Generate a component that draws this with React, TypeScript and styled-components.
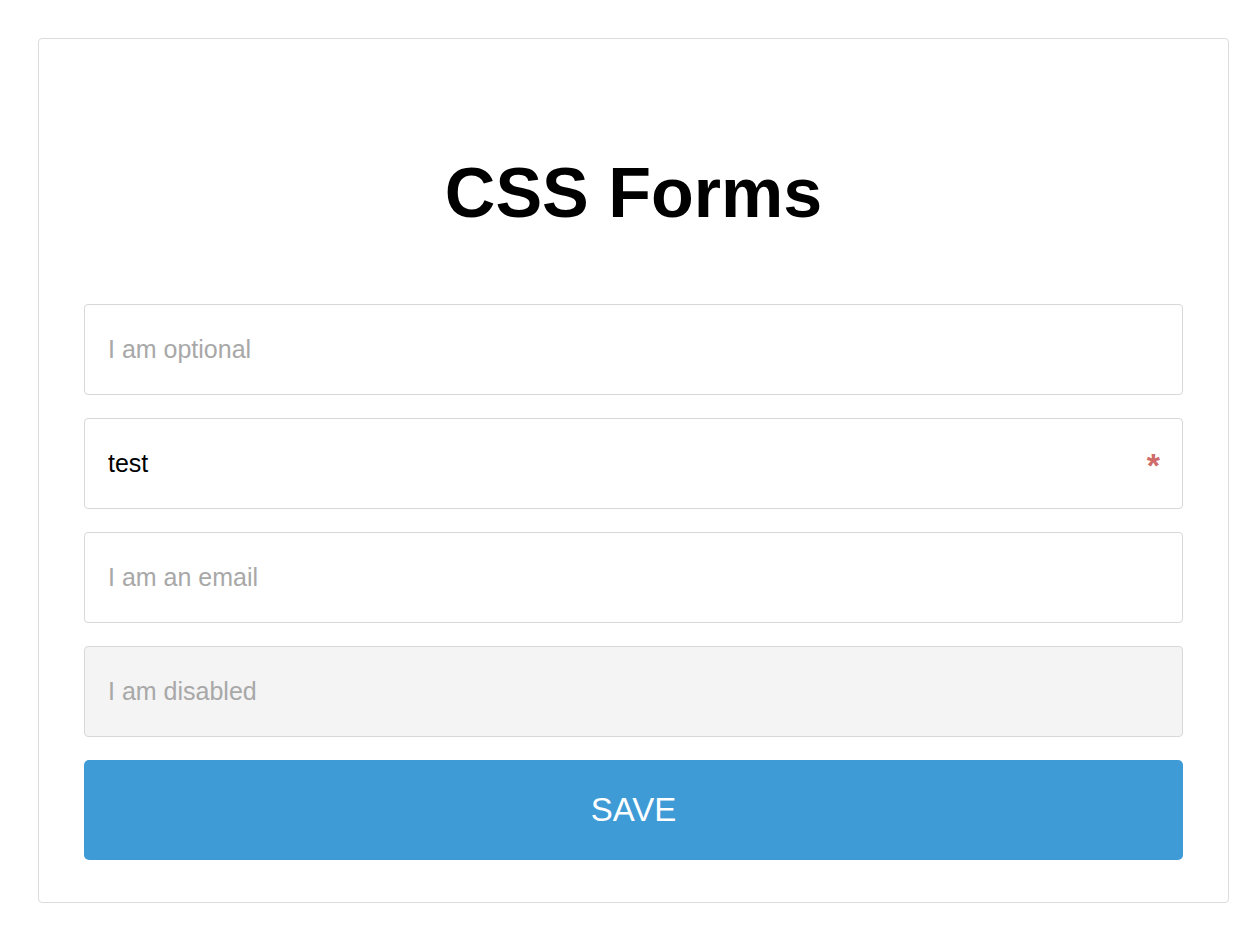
import React from 'react';
import styled, { createGlobalStyle } from 'styled-components';

const GlobalStyle = createGlobalStyle`
  html, body {
    margin: 0;
    padding: 0;
    background: #ffffff;
  }
  body {
    font-family: "Liberation Sans", Arial, Helvetica, sans-serif;
  }
`;

export default function App() {
  return (
    <Page>
      <GlobalStyle />
      <Card>
        <Title>CSS Forms</Title>
        <Form onSubmit={(e) => e.preventDefault()}>
          <Input type="text" placeholder="I am optional" />
          <Field>
            <Input type="text" defaultValue="test" required />
            <Required>*</Required>
          </Field>
          <Input type="email" placeholder="I am an email" />
          <Input type="text" placeholder="I am disabled" disabled />
          <SaveButton type="submit">SAVE</SaveButton>
        </Form>
      </Card>
    </Page>
  );
}

const Page = styled.div`
  padding: 38px 0 0 38px;
`;

const Card = styled.div`
  box-sizing: border-box;
  width: 1191px;
  height: 865px;
  padding: 114px 45px 42px;
  border: 1px solid #dcdcdc;
  border-radius: 4px;
`;

const Title = styled.h1`
  margin: 0 0 71px;
  font-size: 70px;
  font-weight: 700;
  text-align: center;
  color: #000000;
`;

const Form = styled.form`
  display: flex;
  flex-direction: column;
  gap: 23px;
`;

const Field = styled.div`
  position: relative;
`;

const Input = styled.input`
  box-sizing: border-box;
  width: 100%;
  height: 91px;
  padding: 0 23px;
  border: 1px solid #d8d8d8;
  border-radius: 4px;
  outline: none;
  background: #ffffff;
  font-family: "Liberation Sans", Arial, sans-serif;
  font-size: 25px;
  color: #000000;

  &::placeholder {
    color: #a8a8a8;
  }

  &:disabled {
    background: #f4f4f4;
  }
`;

const Required = styled.span`
  position: absolute;
  right: 23px;
  top: 30px;
  font-family: "Liberation Sans", Arial, sans-serif;
  font-size: 34px;
  font-weight: 700;
  line-height: 1;
  color: #cf6b68;
`;

const SaveButton = styled.button`
  height: 100px;
  border: 0;
  border-radius: 5px;
  background: #3e9bd6;
  color: #ffffff;
  font-family: "Liberation Sans", Arial, sans-serif;
  font-size: 33px;
  cursor: pointer;
`;
